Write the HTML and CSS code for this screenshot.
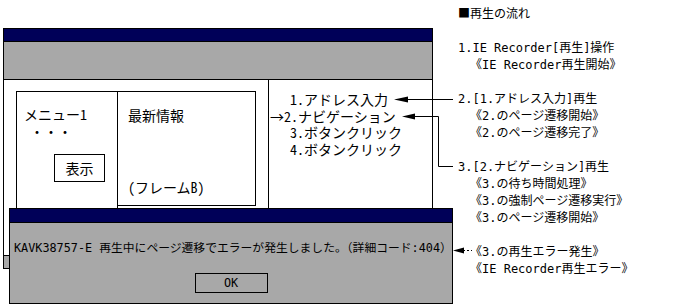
FILE: index.html
```html
<!DOCTYPE html>
<html lang="ja">
<head>
    <meta charset="UTF-8">
    <title>再生の流れ</title>
  <link rel="stylesheet" href="styles.css">
</head>
<body>
    <div class="sheet">
        <!-- Browser window with the error dialog on top -->
        <div class="stage">
            <div class="browser">
                <div class="titlebar"></div>
                <div class="toolbar"></div>
                <div class="viewport">
                    <div class="page-pane">
                        <div class="frames">
                            <div class="frame frame-menu">
                                <p>メニュー1</p>
                                <p class="menu-dots">・・・</p>
                                <div class="show-btn">表示</div>
                            </div>
                            <div class="frame frame-news">
                                <p>最新情報</p>
                                <p class="frame-name">(フレームB)</p>
                            </div>
                        </div>
                    </div>
                    <div class="steps-pane">
                        <ul class="steps">
                            <li>1.アドレス入力</li>
                            <li><span class="cursor">→</span>2.ナビゲーション</li>
                            <li>3.ボタンクリック</li>
                            <li>4.ボタンクリック</li>
                        </ul>
                    </div>
                </div>
                <div class="statusbar"></div>
            </div>

            <div class="dialog">
                <div class="dialog-title"></div>
                <p class="dialog-msg">KAVK38757-E 再生中にページ遷移でエラーが発生しました。（詳細コード:404）</p>
                <button class="ok-btn" type="button">OK</button>
            </div>
        </div>

        <!-- Explanation of the replay flow -->
        <div class="notes">
            <p class="notes-title"><span class="mark">■</span>再生の流れ</p>
            <div class="note-group">
                <p>1.IE Recorder[再生]操作</p>
                <p class="sub">《IE Recorder再生開始》</p>
            </div>
            <div class="note-group">
                <p>2.[1.アドレス入力]再生</p>
                <p class="sub">《2.のページ遷移開始》</p>
                <p class="sub">《2.のページ遷移完了》</p>
            </div>
            <div class="note-group">
                <p>3.[2.ナビゲーション]再生</p>
                <p class="sub">《3.の待ち時間処理》</p>
                <p class="sub">《3.の強制ページ遷移実行》</p>
                <p class="sub">《3.のページ遷移開始》</p>
            </div>
            <div class="note-group">
                <p class="sub">《3.の再生エラー発生》</p>
                <p class="sub">《IE Recorder再生エラー》</p>
            </div>
        </div>

        <!-- Leader lines between the window and the notes -->
        <svg class="links" width="688" height="307" viewBox="0 0 688 307">
            <g stroke="#000" stroke-width="1" fill="none">
                <path d="M407 99.5H453"/>
                <path d="M414 116.5H438.5V166.5H453"/>
                <path d="M463 250.5H472" stroke-dasharray="2 2"/>
            </g>
            <g fill="#000">
                <path d="M394 99.5L408 96.5V102.5Z"/>
                <path d="M402 116.5L415 113.5V119.5Z"/>
                <path d="M453 250.5L464 247.5V253.5Z"/>
            </g>
        </svg>
    </div>
</body>
</html>
```

FILE: styles.css
```css
/* General Reset */
* {
    margin: 0;
    padding: 0;
    box-sizing: border-box;
}

body {
    margin: 0;
    background-color: #fff;
    color: #000;
    font-family: "DejaVu Sans Mono", "Noto Sans CJK JP", monospace;
    font-size: 12px;
    line-height: 17px;
}

.sheet {
    position: relative;
    display: flex;
    width: 688px;
    height: 307px;
    overflow: hidden;
}

/* Left side: mock browser */
.stage {
    position: relative;
    width: 458px;
    padding: 28px 0 0 3px;
}

.browser {
    display: flex;
    flex-direction: column;
    width: 430px;
    height: 241px;
    border: 1px solid #000;
    font-family: "Noto Sans CJK JP", sans-serif;
    font-feature-settings: "hwid" 1;
    font-size: 14px;
    line-height: 17px;
}

.titlebar {
    height: 13px;
    background-color: #000058;
    border-bottom: 1px solid #000;
}

.toolbar {
    height: 38px;
    background-color: #a8a8a8;
    border-bottom: 1px solid #000;
}

.viewport {
    display: flex;
    height: 175px;
}

.statusbar {
    height: 13px;
    background-color: #a8a8a8;
    border-top: 1px solid #000;
}

.page-pane {
    width: 265px;
    border-right: 1px solid #000;
    padding: 11px 0 0 12px;
}

.frames {
    display: flex;
    align-items: flex-start;
}

.frame {
    border: 1px solid #000;
}

.frame-menu {
    width: 102px;
    height: 164px;
    border-bottom: none;
    padding: 14px 0 0 7px;
}

.menu-dots {
    padding-left: 6px;
}

.show-btn {
    width: 51px;
    height: 28px;
    margin: 14px 0 0 30px;
    border: 1px solid #000;
    text-align: center;
    line-height: 26px;
}

.frame-news {
    width: 138px;
    height: 115px;
    border-left: none;
    padding: 15px 0 0 10px;
}

.frame-name {
    margin-top: 55px;
}

.steps-pane {
    flex: 1;
    padding: 11px 0 0 21px;
}

.steps {
    list-style: none;
    line-height: 16.5px;
}

.cursor {
    margin-left: -20px;
}

/* Error dialog lies over the window */
.dialog {
    position: absolute;
    left: 9px;
    top: 208px;
    width: 444px;
    height: 96px;
    border: 1px solid #000;
    background-color: #a8a8a8;
    font-size: 11.8px;
    line-height: 16px;
}

.dialog-title {
    height: 14px;
    background-color: #000058;
    border-bottom: 1px solid #000;
}

.dialog-msg {
    margin: 17px 0 0 4px;
    white-space: nowrap;
}

.ok-btn {
    display: block;
    width: 73px;
    height: 20px;
    margin: 17px auto 0;
    border: 1px solid #000;
    background: transparent;
    font: inherit;
    color: #000;
    line-height: 18px;
}

/* Right side: notes */
.notes {
    padding-top: 4px;
    white-space: nowrap;
}

.mark {
    font-family: "Noto Sans CJK JP", sans-serif;
}

.note-group {
    margin-top: 17px;
}

.sub {
    padding-left: 12px;
}

.links {
    position: absolute;
    left: 0;
    top: 0;
    pointer-events: none;
}
```
